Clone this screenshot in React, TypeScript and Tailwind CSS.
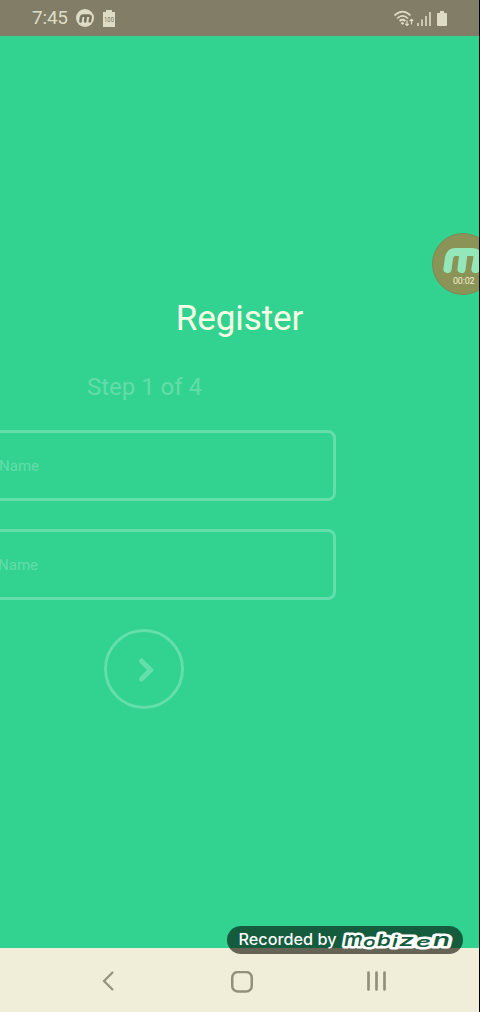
import React from "react";

function MobizenMark({ className }: { className: string }) {
  return (
    <svg viewBox="0 0 39 27" className={className} fill="none" stroke="currentColor" strokeWidth="8.200" strokeLinecap="round" strokeLinejoin="round">
      <path d="M4.500 22 6 11Q7.500 5 12 5H29Q35.500 5 34.500 11L32.500 22M20.500 6 18.500 22" />
    </svg>
  );
}

function StatusBar() {
  return (
    <header className="flex h-9 shrink-0 items-center justify-between bg-[#817d67] pl-8 pr-8 text-[#dfdcc5]">
      <div className="flex items-center">
        <span className="w-11 text-[19px] leading-9 tracking-[-0.2px]">7:45</span>
        <span className="flex size-[18px] items-center justify-center rounded-full bg-[#dfdcc5] text-[#777460]">
          <MobizenMark className="h-[9px] w-[13px]" />
        </span>
        <svg viewBox="0 0 12 17" className="ml-[9px] h-[17px] w-3">
          <path d="M0 2h3V0h6v2h3v15H0z" fill="currentColor" />
          <text x="1" y="11.500" fontFamily="Roboto, sans-serif" fontSize="6.500" fill="#777460" textLength="10" lengthAdjust="spacingAndGlyphs">100</text>
        </svg>
      </div>
      <div className="flex items-center">
        <svg viewBox="0 0 20 17" className="h-[17px] w-5" fill="none" stroke="currentColor" strokeWidth="1.700">
          <path d="M.5 5.500Q8.500-2.200 16.500 5.500M3 8.500Q8.500 3.200 14 8.500M5.500 11Q8.500 8.500 11.500 11" />
          <path d="m8.500 11.500 1.700 1.700-1.700 1.700-1.700-1.700z" fill="currentColor" stroke="none" />
          <path d="M13 10.500v5M11.300 13.800l1.700 1.700 1.700-1.700M17.500 14.500v-5M15.800 11l1.700-1.700 1.700 1.700" strokeWidth="1.200" />
        </svg>
        <svg viewBox="0 0 14 15" className="ml-[3px] h-[15px] w-3.5" stroke="currentColor" strokeWidth="1.600">
          <path d="M1 15v-3M5 15V8.500M9 15V5M13 15V1" />
        </svg>
        <svg viewBox="0 0 10 15" className="ml-1.5 h-[15px] w-2.5" fill="currentColor">
          <path d="M1 2h2V0h4v2h2q1 0 1 1v11q0 1-1 1H1q-1 0-1-1V3q0-1 1-1z" />
        </svg>
      </div>
    </header>
  );
}

function NameField({ labelWidth }: { labelWidth: string }) {
  return (
    <div className="-ml-12 flex h-[71px] w-[384px] shrink-0 items-center rounded-lg border-[3px] border-[#64deaa] pl-[11px] text-[15px] text-[#64dca8]">
      <span className={`${labelWidth} mt-px whitespace-nowrap text-right`}>Name</span>
    </div>
  );
}

function RecorderBadge() {
  return (
    <div className="absolute left-[227px] top-[926px] flex h-7 w-[236px] items-center overflow-hidden rounded-full bg-[linear-gradient(#145c3d_22px,#666455_22px)] pl-[11px]">
      <svg viewBox="0 0 225 28" className="h-7 w-[225px]">
        <text x="0.500" y="19" textLength="98" lengthAdjust="spacingAndGlyphs" fill="#fff" fontFamily="Inter, sans-serif" fontSize="15.500" fontWeight="500">Recorded by</text>
        <g fontFamily="Inter, sans-serif" fontWeight="600" fontStyle="italic" fill="#145c3d" stroke="#fff" strokeWidth="5" strokeLinejoin="round" paintOrder="stroke">
          <text x="106" y="19.500" fontSize="20" textLength="19" lengthAdjust="spacingAndGlyphs">m</text>
          <text x="125" y="21" fontSize="14" textLength="13" lengthAdjust="spacingAndGlyphs">o</text>
          <text x="139" y="20" fontSize="16" textLength="14" lengthAdjust="spacingAndGlyphs">b</text>
          <text x="154" y="21" fontSize="15" textLength="6" lengthAdjust="spacingAndGlyphs">i</text>
          <text x="161" y="19.500" fontSize="16" textLength="15" lengthAdjust="spacingAndGlyphs">z</text>
          <text x="178" y="21" fontSize="14" textLength="15" lengthAdjust="spacingAndGlyphs">e</text>
          <text x="195" y="19.500" fontSize="18" textLength="17" lengthAdjust="spacingAndGlyphs">n</text>
        </g>
      </svg>
    </div>
  );
}

export default function App() {
  return (
    <div className="h-[1012px] w-[480px] bg-black font-['Roboto',sans-serif]">
      <div className="relative flex h-full w-[479px] flex-col overflow-hidden bg-[#32d291]">
        <StatusBar />
        <main className="flex min-h-0 flex-1 flex-col">
          <h1 className="mt-[259px] h-12 text-center text-[35px] leading-[48px] tracking-[-0.1px] text-[#f5ffe5]">Register</h1>
          <section className="mt-[28px] flex w-[289px] flex-col">
            <h2 className="h-8 text-center text-2xl leading-8 text-[#64dca8]">Step 1 of 4</h2>
            <div className="mt-[27px] flex flex-col gap-[28px]">
              <NameField labelWidth="w-[73px]" />
              <NameField labelWidth="w-[72px]" />
            </div>
            <button className="mr-[105px] mt-[29px] flex size-20 items-center justify-center self-end rounded-full border-[3px] border-[#64deaa] text-[#64deaa]">
              <svg viewBox="0 0 16 24" className="ml-[3px] mt-px h-6 w-4" fill="none" stroke="currentColor" strokeWidth="5" strokeLinecap="round">
                <path d="m3.500 3 9 9-9 9" />
              </svg>
            </button>
          </section>
        </main>
        <nav className="flex h-16 shrink-0 items-center bg-[#f0edd8] pl-[102px] text-[#939079]">
          <svg viewBox="0 0 12 20" className="mt-0.5 h-5 w-3" fill="none" stroke="currentColor" strokeWidth="2.200"><path d="M11 1 2 10l9 9" /></svg>
          <svg viewBox="0 0 22 22" className="ml-[117px] mt-[3px] size-[22px]" fill="none" stroke="currentColor" strokeWidth="2.500"><rect x="1.250" y="1" width="19.500" height="19.500" rx="5.500" /></svg>
          <svg viewBox="0 0 20 20" className="ml-[114px] mt-0.5 h-5 w-5" stroke="currentColor" strokeWidth="2.700" strokeLinecap="round"><path d="M1.500 1.500v17M9.500 1.500v17M17.500 1.500v17" /></svg>
        </nav>
        <div className="absolute left-[432px] top-[233px] size-[62px] rounded-full border border-[#788a55] bg-[#8c9357] text-[#94e7b8]">
          <MobizenMark className="ml-[10px] mt-[13px] h-[27px] w-[39px]" />
          <p className="ml-5 mt-px text-[9px] leading-3 tracking-[-0.2px] text-[#f0eed2]">00:02</p>
        </div>
        <RecorderBadge />
      </div>
    </div>
  );
}
